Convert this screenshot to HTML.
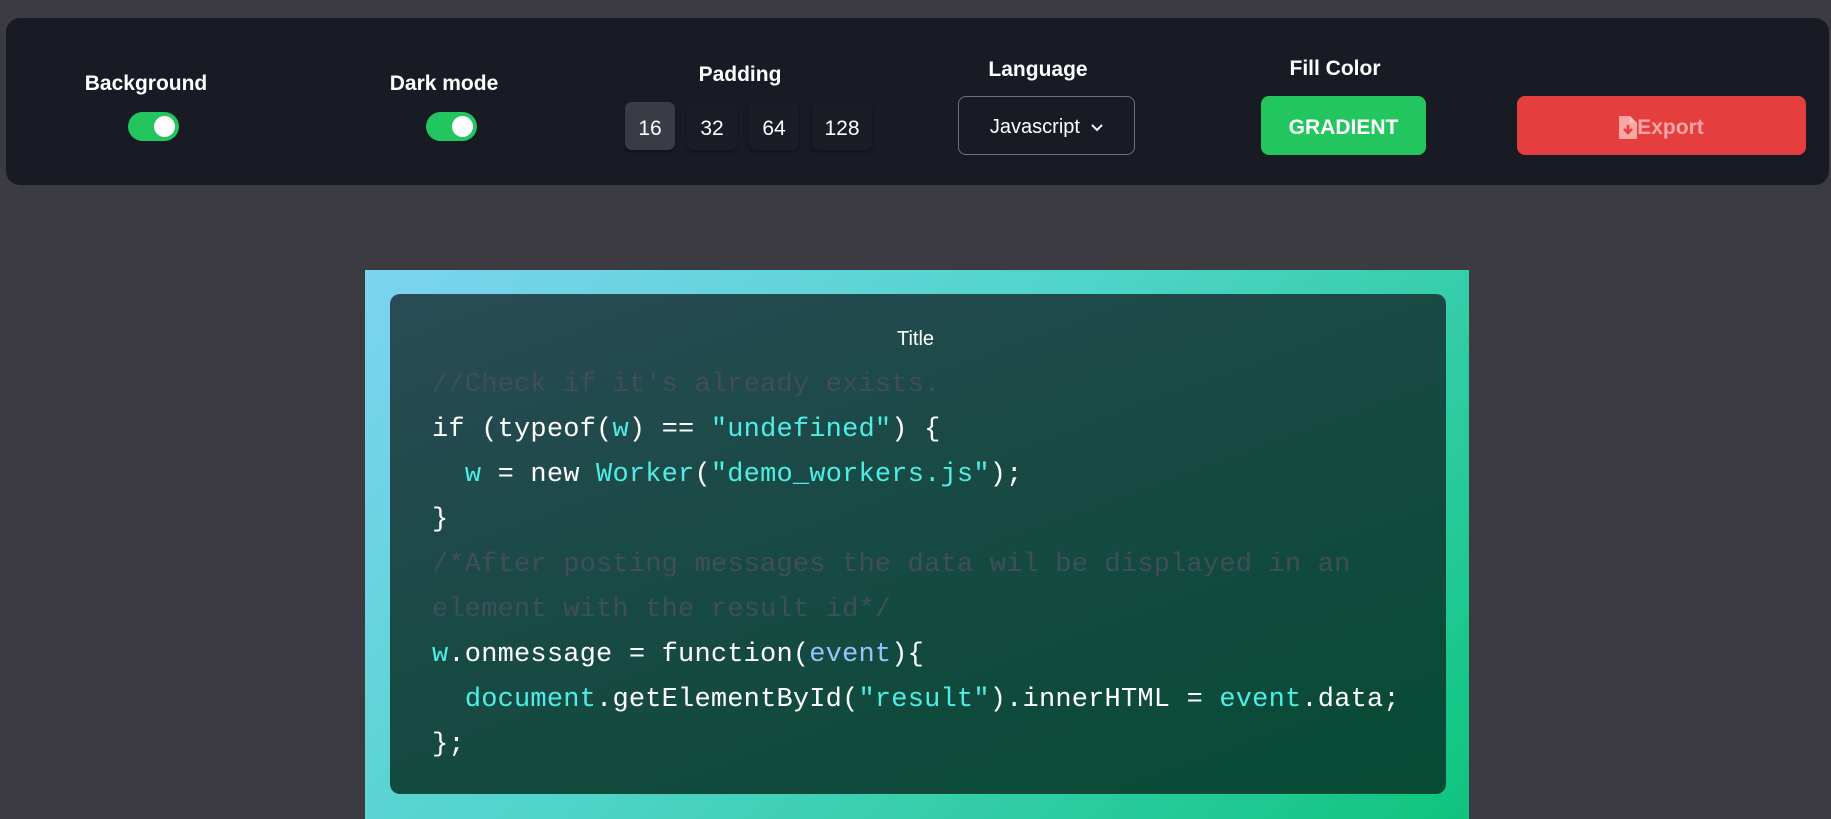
<!DOCTYPE html>
<html><head><meta charset="utf-8"><style>
*{box-sizing:border-box;margin:0;padding:0}
body{width:1831px;height:819px;background:#3c3b41;position:relative;overflow:hidden;font-family:"Liberation Sans",sans-serif;color:#fff}
.panel{position:absolute;left:6px;top:18px;width:1823px;height:167px;background:#181a24;border-radius:14px}
.lbl{position:absolute;font-size:21px;font-weight:bold;transform:translateX(-50%);white-space:nowrap}
.tog{position:absolute;width:51px;height:29px;border-radius:15px;background:#22c55e}
.tog::after{content:"";position:absolute;right:4px;top:4px;width:21px;height:21px;border-radius:50%;background:#fff}
.pb{position:absolute;top:102px;height:48px;width:50px;border-radius:7px;background:#1b1d26;box-shadow:0 2px 3px rgba(0,0,0,.3);font-size:21px;display:flex;align-items:center;justify-content:center;padding-top:6px}
.btn{position:absolute;top:96px;height:59px;border-radius:8px;display:flex;align-items:center;justify-content:center;font-size:21px;padding-top:4px}
.grad{position:absolute;left:365px;top:270px;width:1104px;height:549px;background:linear-gradient(135deg,#7dd3f1 0%,#4fd4c8 45%,#0fc47e 100%)}
.card{position:absolute;left:390px;top:294px;width:1056px;height:500px;border-radius:10px;background:linear-gradient(160deg,#2a4b56 0%,#1a4a45 40%,#064b34 100%)}
.title{position:absolute;left:0;right:0;top:328px;text-align:center;font-size:20px}
pre{position:absolute;left:432px;top:363px;font-family:"Liberation Mono",monospace;font-size:27px;line-height:45px;color:#fff;letter-spacing:0.2px}
.c{color:#404e5c}.s{color:#4eeee6}.p{color:#93c5fd}
</style></head><body>
<div class="panel"></div>
<div class="lbl" style="left:146px;top:72px">Background</div>
<div class="tog" style="left:128px;top:112px"></div>
<div class="lbl" style="left:444px;top:72px">Dark mode</div>
<div class="tog" style="left:426px;top:112px"></div>
<div class="lbl" style="left:740px;top:63px">Padding</div>
<div class="pb" style="left:625px;background:#3a3c45">16</div>
<div class="pb" style="left:687px">32</div>
<div class="pb" style="left:749px">64</div>
<div class="pb" style="left:812px;width:60px">128</div>
<div class="lbl" style="left:1038px;top:58px">Language</div>
<div class="btn" style="left:958px;width:177px;border:1px solid #6b7280;font-size:20px">Javascript&nbsp;&nbsp;<svg width="12" height="8" viewBox="0 0 12 8"><path d="M1 1l5 5 5-5" stroke="#fff" stroke-width="2" fill="none"/></svg></div>
<div class="lbl" style="left:1335px;top:57px">Fill Color</div>
<div class="btn" style="left:1261px;width:165px;background:#22c55e;font-weight:bold">GRADIENT</div>
<div class="btn" style="left:1517px;width:289px;background:#e53e3e;color:#fca5a5;font-weight:bold"><svg width="18" height="23" viewBox="0 0 18 23"><path d="M0 0h11l7 7v16H0z" fill="#fca5a5"/><path d="M11 0v7h7" fill="#f5c0c0"/><path d="M9 9v8M5 13l4 4 4-4" stroke="#e53e3e" stroke-width="2.5" fill="none"/></svg>Export</div>
<div class="grad"></div>
<div class="card"></div>
<div class="title">Title</div>
<pre><span class="c">//Check if it's already exists.</span>
if (typeof(<span class="s">w</span>) == <span class="s">"undefined"</span>) {
  <span class="s">w</span> = new <span class="s">Worker</span>(<span class="s">"demo_workers.js"</span>);
}
<span class="c">/*After posting messages the data wil be displayed in an
element with the result id*/</span>
<span class="s">w</span>.onmessage = function(<span class="p">event</span>){
  <span class="s">document</span>.getElementById(<span class="s">"result"</span>).innerHTML = <span class="s">event</span>.data;
};</pre>
</body></html>
